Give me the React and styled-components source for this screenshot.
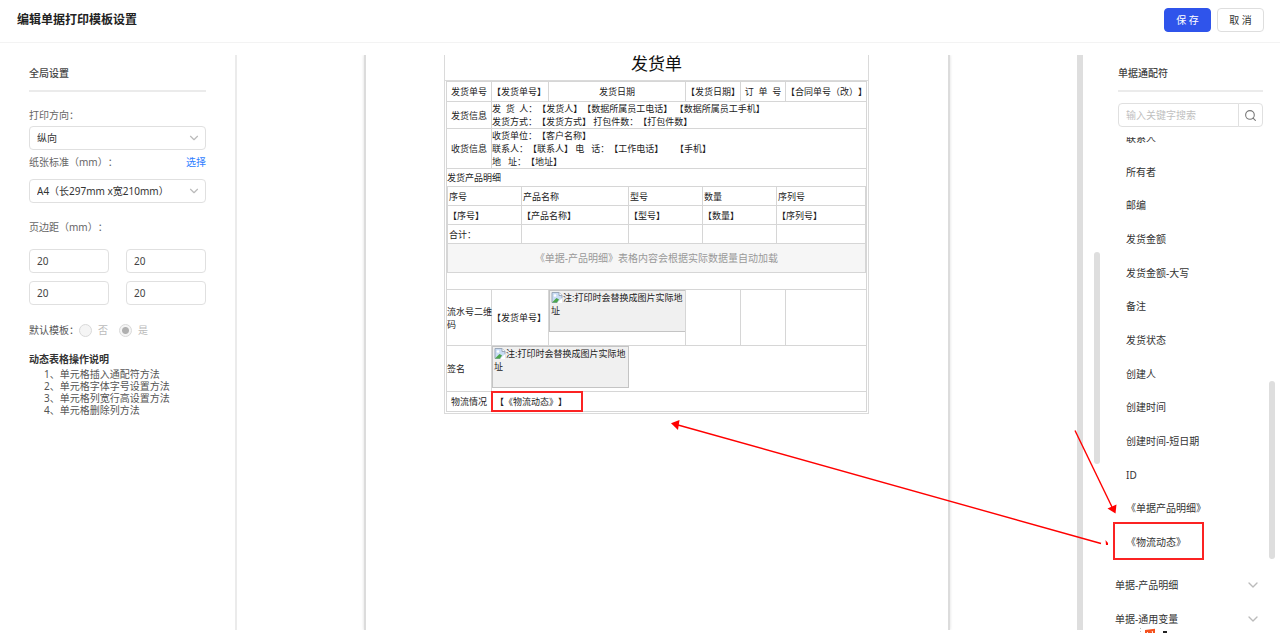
import { ChevronDown, Search } from 'lucide-react';
import styled, { createGlobalStyle } from 'styled-components';

const GlobalStyle = createGlobalStyle`
  *, *::before {
    box-sizing: border-box;
  }
  body {
    margin: 0;
    overflow: hidden;
    background-color: #fff;
    color: #333;
    font-family: 'Noto Sans', 'Noto Sans CJK SC', sans-serif;
    font-size: 10px;
    line-height: 16px;
    text-spacing-trim: space-all;
  }
  h1, h2, h3, ul, ol, p {
    margin: 0;
    padding: 0;
    list-style: none;
  }
  button, input, select {
    font: inherit;
    color: inherit;
    text-spacing-trim: inherit;
  }
`;

const Page = styled.div`
  position: relative;
  display: flex;
  flex-direction: column;
  height: 100vh;
  overflow: hidden;
`;

const Header = styled.header`
  display: flex;
  align-items: center;
  justify-content: space-between;
  height: 43px;
  padding: 0 16px 2px 17px;
  border-bottom: 1px #f3f3f3 solid;
`;

const PageTitle = styled.h1`
  color: #222;
  font-size: 12px;
  font-weight: bold;
`;

const HeaderButtons = styled.div`
  display: flex;
  gap: 6px;
`;

const HeaderButton = styled.button`
  width: 47px;
  height: 24px;
  padding: 0;
  border: 1px solid ${({ $primary }) => ($primary ? '#2f54eb' : '#dedede')};
  border-radius: 4px;
  background-color: ${({ $primary }) => ($primary ? '#2f54eb' : '#fff')};
  color: ${({ $primary }) => ($primary ? '#fff' : '#333')};
`;

const Main = styled.main`
  display: grid;
  grid-template-columns: 237px 1fr 197px;
  flex: 1;
  min-height: 0;
  padding: 12px 0 3px;
`;

const SettingPanel = styled.aside`
  padding: 10px 29px 0;
  border-right: 2px #ebebeb solid;
`;

const PanelTitle = styled.h2`
  height: 27px;
  border-bottom: 2px #ebebeb solid;
  color: #444;
  font-size: 10px;
  font-weight: 500;
`;

const Field = styled.div`
  margin-top: ${({ $gap }) => $gap}px;
  color: #666;
`;

const LabelRow = styled.div`
  display: flex;
  justify-content: space-between;
  margin-bottom: ${({ $gap }) => $gap}px;
`;

const SelectLink = styled.a`
  color: #2f7dff;
  text-decoration: none;
`;

const SelectBox = styled.div`
  position: relative;
  svg {
    position: absolute;
    top: 5px;
    right: 5px;
    color: #bbb;
    pointer-events: none;
  }
`;

const Select = styled.select`
  display: block;
  width: 100%;
  height: 24px;
  padding: 0 7px;
  border: 1px #e0e0e0 solid;
  border-radius: 4px;
  appearance: none;
  background-color: #fff;
  color: #333;
`;

const MarginGrid = styled.div`
  display: grid;
  grid-template-columns: 1fr 1fr;
  gap: 8px 17px;
`;

const TextInput = styled.input`
  width: 100%;
  min-width: 0;
  height: 24px;
  padding: 0 7px;
  border: 1px #e0e0e0 solid;
  border-radius: 4px;
  color: #444;
`;

const RadioRow = styled.div`
  display: flex;
  align-items: center;
  margin-top: 17px;
  color: #555;
`;

const RadioLabel = styled.label`
  display: flex;
  align-items: center;
  gap: 6px;
  margin-right: 11px;
  color: #bbb;
`;

const Radio = styled.input`
  width: 13px;
  height: 13px;
  margin: 0;
  border: 1px #d9d9d9 solid;
  border-radius: 50%;
  appearance: none;
  background: #f5f5f5;
  &:checked {
    background: radial-gradient(circle, #b0b0b0 3px, #f5f5f5 4px);
  }
`;

const HelpTitle = styled.h3`
  margin-top: 13px;
  color: #333;
  font-size: 10px;
  font-weight: bold;
`;

const HelpList = styled.ol`
  padding: 1px 0 0 15px;
  color: #555;
  line-height: 12px;
`;

const Canvas = styled.section`
  display: flex;
  justify-content: center;
  overflow: hidden;
  border-right: 6px #dedede solid;
`;

const Paper = styled.div`
  width: 586px;
  padding: 0 80px;
  border: 2px #dcdcdc solid;
  border-width: 0 2px;
  box-shadow: 0 0 3px #ddd;
`;

const Sheet = styled.div`
  width: 425px;
  margin-left: -2px;
  padding: 0 1px 1px;
  border: 1px #dadada solid;
  border-top: 0;
  color: #222;
  font-size: 9px;
  line-height: 13px;
`;

const SheetTitle = styled.p`
  height: 26px;
  margin: 0 -1px;
  border-bottom: 1px #dadada solid;
  color: #111;
  font-size: 17px;
  line-height: 17px;
  text-align: center;
`;

const Table = styled.table`
  width: 100%;
  border-collapse: collapse;
  table-layout: fixed;
`;

const Row = styled.tr`
  height: ${({ $height }) => $height}px;
`;

const Cell = styled.td`
  padding: 0 0 0 ${({ $indent }) => $indent || 0}px;
  border: 1px #d6d6d6 solid;
  text-align: ${({ $align }) => $align || 'left'};
  vertical-align: ${({ $valign }) => $valign || 'middle'};
  white-space: pre;
`;

const DetailTitle = styled.p`
  height: 17px;
  line-height: 18px;
`;

const DetailTip = styled.p`
  height: 29px;
  border: 1px #d6d6d6 solid;
  border-top: 0;
  background-color: #f6f6f6;
  color: #999;
  font-size: 10px;
  line-height: 28px;
  text-align: center;
`;

const ImageSlot = styled.div`
  width: 137px;
  height: 42px;
  padding-left: 1px;
  border: 1px #c4c4c4 solid;
  background-color: #f0f0f0;
  white-space: normal;
  svg {
    vertical-align: top;
  }
`;

const Marked = styled.span`
  position: relative;
  &::before {
    content: '';
    position: absolute;
    top: ${({ $box }) => $box[0]}px;
    left: ${({ $box }) => $box[1]}px;
    width: ${({ $box }) => $box[2]}px;
    height: ${({ $box }) => $box[3]}px;
    border: 2px #fb2323 solid;
  }
`;

const WildcardPanel = styled.aside`
  position: relative;
  display: flex;
  flex-direction: column;
  min-height: 0;
  padding: 10px 17px 0 35px;
`;

const SearchBar = styled.form`
  display: flex;
  margin-top: 11px;
  input {
    flex: 1;
    border-radius: 4px 0 0 4px;
  }
  input::placeholder {
    color: #bfbfbf;
  }
`;

const SearchButton = styled.button`
  display: flex;
  align-items: center;
  justify-content: center;
  width: 25px;
  height: 24px;
  margin-left: -1px;
  padding: 0;
  border: 1px #e0e0e0 solid;
  border-radius: 0 4px 4px 0;
  background-color: #fff;
  color: #777;
`;

const WildcardScroll = styled.div`
  flex: 1;
  min-height: 0;
  margin: 10px 0 0 -5px;
  overflow: hidden;
`;

const WildcardList = styled.ul`
  display: grid;
  grid-auto-rows: 1fr;
  align-items: center;
  height: 438px;
  margin-top: -16px;
  padding-left: 13px;
`;

const Groups = styled.div`
  padding-top: 9px;
`;

const Group = styled.button`
  display: flex;
  align-items: center;
  justify-content: space-between;
  width: 100%;
  height: 34px;
  padding: 0 2px;
  border: 0;
  background: none;
  svg {
    color: #bbb;
  }
`;

const ScrollThumb = styled.div`
  position: absolute;
  top: ${({ $top }) => $top}px;
  left: ${({ $left }) => $left}px;
  width: 6px;
  height: ${({ $length }) => $length}px;
  border-radius: 3px;
  background-color: #dedede;
`;

const Arrows = styled.svg`
  position: absolute;
  top: 0;
  left: 0;
  pointer-events: none;
`;

const columns = [45, 57, 137, 55, 45, 81];
// the last column takes what is left
const detailColumns = [74, 107, 74, 74, undefined];
const detailFields = ['序号', '产品名称', '型号', '数量', '序列号'];
const margins = ['上', '下', '左', '右'];
const helps = ['单元格插入通配符方法', '单元格字体字号设置方法', '单元格列宽行高设置方法', '单元格删除列方法'];
const wildcards = [
  '联系人',
  '所有者',
  '邮编',
  '发货金额',
  '发货金额-大写',
  '备注',
  '发货状态',
  '创建人',
  '创建时间',
  '创建时间-短日期',
  'ID',
  '《单据产品明细》',
];

const BrokenImage = () => (
  <ImageSlot>
    <svg width='12' height='13' viewBox='0 0 12 13' aria-hidden='true'>
      <path d='M1 1.5h7l3 3v7H1z' fill='#c9dcf5' stroke='#9aa7b8' />
      <path d='M8 1.5v3h3' fill='#fff' stroke='#9aa7b8' />
      <path d='M1 11.5 5.5 7 8 8.5 6 11.5z' fill='#4ca64c' />
      <path d='M6 12 11.5 6.5V12z' fill='#fff' />
      <circle cx='4' cy='4.5' r='1.3' fill='#fff' />
    </svg>
    注:打印时会替换成图片实际地址
  </ImageSlot>
);

const Columns = ({ widths }) => (
  <colgroup>
    {widths.map((width, i) => (
      <col key={i} width={width} />
    ))}
  </colgroup>
);

const ProductDetail = () => (
  <>
    <DetailTitle>发货产品明细</DetailTitle>
    <Table>
      <Columns widths={detailColumns} />
      <tbody>
        <Row $height={19}>
          {detailFields.map((name) => (
            <Cell key={name} $indent={1}>{name}</Cell>
          ))}
        </Row>
        <Row $height={19}>
          {detailFields.map((name) => (
            <Cell key={name}>{`【${name}】`}</Cell>
          ))}
        </Row>
        <Row $height={19}>
          <Cell $indent={1}>合计：</Cell>
          <Cell />
          <Cell />
          <Cell />
          <Cell />
        </Row>
      </tbody>
    </Table>
    <DetailTip>《单据-产品明细》表格内容会根据实际数据量自动加载</DetailTip>
  </>
);

const DeliverySheet = () => (
  <Sheet>
    <SheetTitle>发货单</SheetTitle>
    <Table>
      <Columns widths={columns} />
      <tbody>
        <Row $height={20}>
          <Cell $align='center'>发货单号</Cell>
          <Cell>【发货单号】</Cell>
          <Cell $align='center'>发货日期</Cell>
          <Cell>【发货日期】</Cell>
          <Cell $align='center'>{'订  单  号'}</Cell>
          <Cell>【合同单号（改）】</Cell>
        </Row>
        <Row $height={27}>
          <Cell $align='center'>发货信息</Cell>
          <Cell colSpan={5}>
            {'发  货  人：【发货人】【数据所属员工电话】 【数据所属员工手机】\n发货方式：【发货方式】 打包件数：【打包件数】'}
          </Cell>
        </Row>
        <Row $height={40}>
          <Cell $align='center'>收货信息</Cell>
          <Cell colSpan={5}>
            {'收货单位：【客户名称】\n联系人：【联系人】 电   话：【工作电话】     【手机】\n地   址：【地址】'}
          </Cell>
        </Row>
        <Row $height={121}>
          <Cell colSpan={6} $valign='top'>
            <ProductDetail />
          </Cell>
        </Row>
        <Row $height={56}>
          <Cell>{'流水号二维\n码'}</Cell>
          <Cell>【发货单号】</Cell>
          <Cell $valign='top'>
            <BrokenImage />
          </Cell>
          <Cell />
          <Cell />
          <Cell />
        </Row>
        <Row $height={46}>
          <Cell>签名</Cell>
          <Cell colSpan={5} $valign='top'>
            <BrokenImage />
          </Cell>
        </Row>
        <Row $height={20}>
          <Cell $align='center'>物流情况</Cell>
          <Cell colSpan={5} $indent={3}>
            <Marked $box={[-4, -4, 92, 21]}>【《物流动态》】</Marked>
          </Cell>
        </Row>
      </tbody>
    </Table>
  </Sheet>
);

const Settings = () => (
  <SettingPanel>
    <PanelTitle>全局设置</PanelTitle>
    <Field $gap={15}>
      <LabelRow $gap={3}>
        <label htmlFor='direction'>打印方向：</label>
      </LabelRow>
      <SelectBox>
        <Select id='direction'>
          <option>纵向</option>
        </Select>
        <ChevronDown size={14} strokeWidth={2} />
      </SelectBox>
    </Field>
    <Field $gap={4}>
      <LabelRow $gap={9}>
        <label htmlFor='paper'>纸张标准（mm）：</label>
        <SelectLink href='#paper'>选择</SelectLink>
      </LabelRow>
      <SelectBox>
        <Select id='paper'>
          <option>A4（长297mm x宽210mm）</option>
        </Select>
        <ChevronDown size={14} strokeWidth={2} />
      </SelectBox>
    </Field>
    <Field $gap={16}>
      <LabelRow $gap={14}>页边距（mm）：</LabelRow>
      <MarginGrid>
        {margins.map((side) => (
          <TextInput key={side} type='text' aria-label={side} defaultValue='20' />
        ))}
      </MarginGrid>
    </Field>
    <RadioRow>
      默认模板：
      <RadioLabel>
        <Radio type='radio' name='isDefault' disabled />
        否
      </RadioLabel>
      <RadioLabel>
        <Radio type='radio' name='isDefault' disabled defaultChecked />
        是
      </RadioLabel>
    </RadioRow>
    <HelpTitle>动态表格操作说明</HelpTitle>
    <HelpList>
      {helps.map((help, i) => (
        <li key={help}>{`${i + 1}、${help}`}</li>
      ))}
    </HelpList>
  </SettingPanel>
);

const Wildcards = () => (
  <WildcardPanel>
    <PanelTitle>单据通配符</PanelTitle>
    <SearchBar>
      <TextInput type='text' aria-label='搜索' placeholder='输入关键字搜索' />
      <SearchButton type='button' aria-label='搜索'>
        <Search size={13} strokeWidth={2} />
      </SearchButton>
    </SearchBar>
    <WildcardScroll>
      <WildcardList>
        {wildcards.map((name) => (
          <li key={name}>{name}</li>
        ))}
        <li>
          <Marked $box={[-13, -13, 91, 38]}>《物流动态》</Marked>
        </li>
      </WildcardList>
      <Groups>
        {['单据-产品明细', '单据-通用变量'].map((name) => (
          <Group key={name} type='button'>
            {name}
            <ChevronDown size={16} strokeWidth={2} />
          </Group>
        ))}
      </Groups>
    </WildcardScroll>
    <ScrollThumb $top={197} $left={11} $length={212} />
    <ScrollThumb $top={326} $left={186} $length={178} />
  </WildcardPanel>
);

const App = () => (
  <Page>
    <GlobalStyle />
    <Header>
      <PageTitle>编辑单据打印模板设置</PageTitle>
      <HeaderButtons>
        <HeaderButton type='button' $primary>
          保 存
        </HeaderButton>
        <HeaderButton type='button'>取 消</HeaderButton>
      </HeaderButtons>
    </Header>
    <Main>
      <Settings />
      <Canvas>
        <Paper>
          <DeliverySheet />
        </Paper>
      </Canvas>
      <Wildcards />
    </Main>
    <Arrows width='1280' height='633' viewBox='0 0 1280 633' aria-hidden='true'>
      <g stroke='#f00' strokeWidth='1.4'>
        <path d='M1075 430.5 1112 507' />
        <path d='M678 425 1101 543.5' />
      </g>
      <g fill='#f00'>
        <path d='M1115.5 513.5 1107.5 508.5 1116.5 504.5z' />
        <path d='M671 423.3 679.5 420 678 430z' />
        <path d='M1105.5 540 1108 543v2h-2z' />
      </g>
      {/* input method bar peeking in from the bottom edge */}
      <path d='M1140.5 628v5' stroke='#bbb' strokeDasharray='1 2' />
      <path d='M1146 633v-2l8-1v3M1148 633l4-1' fill='none' stroke='#f4511e' strokeWidth='2' />
      <path d='M1163 631h4v2h-4z' fill='#222' />
    </Arrows>
  </Page>
);

export default App;
